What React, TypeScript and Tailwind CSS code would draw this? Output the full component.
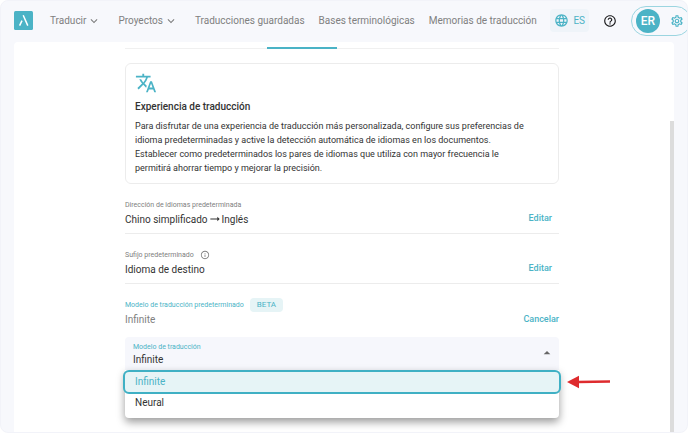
import React, { useState } from "react";
import {
	MdArrowDropUp,
	MdArrowRightAlt,
	MdExpandMore,
	MdHelpOutline,
	MdInfoOutline,
	MdLanguage,
	MdOutlineSettings,
	MdTranslate,
} from "react-icons/md";

const models = ["Infinite", "Neural"];

interface NavItemProps {
	text: string;
	menu?: boolean;
}

const NavItem = ({ text, menu }: NavItemProps) => {
	if (menu) {
		return (
			<button type="button" className="mr-[3px] flex items-center gap-px">
				{text}
				<MdExpandMore className="size-[14px]" />
			</button>
		);
	}
	return <a href="#">{text}</a>;
};

const Logo = () => (
	<svg viewBox="0 0 19 19" className="size-[19px]" aria-hidden="true">
		<rect width="19" height="19" rx="1.5" fill="#4bb3c6" />
		<path
			d="M9.2 4.2 13.8 14.6M8 9.6 5.6 14.6"
			fill="none"
			stroke="#fff"
			strokeWidth="1.5"
		/>
	</svg>
);

const Header = () => (
	<header className="flex h-[41px] items-center overflow-hidden pb-[2px] pl-[13px] whitespace-nowrap">
		<a href="#" aria-label="Inicio" className="mr-[17px] shrink-0">
			<Logo />
		</a>
		<nav className="flex shrink-0 items-center gap-[14px] text-[10px] text-[#808080]">
			<NavItem text="Traducir" menu />
			<NavItem text="Proyectos" menu />
			<NavItem text="Traducciones guardadas" />
			<NavItem text="Bases terminológicas" />
			<NavItem text="Memorias de traducción" />
		</nav>
		<div className="ml-auto flex shrink-0 items-center">
			<button
				type="button"
				className="flex h-[23px] items-center gap-1 rounded-sm bg-[#eff4f9] px-1 text-[10px] text-[#4bb3c6]"
			>
				<MdLanguage className="size-[15px]" />
				ES
			</button>
			<button type="button" aria-label="Ayuda" className="mx-[14px]">
				<MdHelpOutline className="size-[14px] text-[#1d1d1f]" />
			</button>
			<div className="-mr-1 flex h-[30px] items-center gap-[10px] rounded-full border border-[#9bd5e0] pr-[6px] pl-1">
				<span className="flex size-6 items-center justify-center rounded-full bg-[#4bb3c6] text-xs font-medium text-white">
					ER
				</span>
				<button type="button" aria-label="Ajustes">
					<MdOutlineSettings className="size-[14px] text-[#4bb3c6]" />
				</button>
			</div>
		</div>
	</header>
);

interface SettingRowProps {
	label: React.ReactNode;
	value: React.ReactNode;
}

const SettingRow = ({ label, value }: SettingRowProps) => (
	<div className="flex items-end justify-between border-b border-[#ececec] pt-[15px] pb-[6px]">
		<div>
			<p className="flex h-3 items-center gap-[6px] text-[7px] text-[#808080]">
				{label}
			</p>
			<p className="flex h-4 items-center text-[10px]">{value}</p>
		</div>
		<button
			type="button"
			className="h-4 px-[7px] text-[9px] font-medium text-[#4bb3c6]"
		>
			Editar
		</button>
	</div>
);

const ModelSelect = () => {
	const [model, setModel] = useState("Infinite");
	const [open, setOpen] = useState(true);

	const choose = (value: string) => {
		setModel(value);
		setOpen(false);
	};

	return (
		<div className="relative mt-[9px]">
			<div className="rounded-t-sm border-b border-[#4bb3c6] bg-[#f6f7fc] px-2 py-1">
				<label
					htmlFor="model"
					className="block h-3 text-[7px] leading-3 text-[#4bb3c6]"
				>
					Modelo de traducción
				</label>
				<select
					id="model"
					value={model}
					onChange={(e) => choose(e.target.value)}
					onMouseDown={(e) => {
						e.preventDefault();
						setOpen(!open);
					}}
					className="block h-[13px] w-full appearance-none bg-transparent text-[10px] leading-[13px] outline-none"
				>
					{models.map((m) => (
						<option key={m}>{m}</option>
					))}
				</select>
				<MdArrowDropUp className="pointer-events-none absolute top-2 right-1 size-4 text-[#666]" />
			</div>
			{open && (
				<div className="absolute inset-x-0 top-full">
					<ul className="rounded-b bg-white pb-[6px] text-[10px] shadow-[0_4px_8px_rgba(0,0,0,0.4)]">
						{models.map((m) => (
							<li key={m}>
								<button
									type="button"
									onClick={() => choose(m)}
									className={
										m === model
											? "-mx-[2px] -mt-px flex h-6 w-[calc(100%+4px)] items-center rounded-md border-2 border-[#3fb0c4] bg-[#e6f4f6] px-[10px] pb-px text-[#4bb3c6]"
											: "flex h-[18px] w-full items-center px-[10px] pb-px"
									}
								>
									{m}
								</button>
							</li>
						))}
					</ul>
					<svg
						viewBox="0 0 44 14"
						className="absolute top-1 left-full ml-2 h-[14px] w-11"
						aria-hidden="true"
					>
						<path d="M0 7 12 .8V13.2Z" fill="#de2b2e" />
						<path d="M11 7 43 6.5" stroke="#de2b2e" strokeWidth="2.6" />
					</svg>
				</div>
			)}
		</div>
	);
};

const App = () => (
	<div className="flex min-h-screen flex-col overflow-hidden rounded-lg border border-[#f2f3f9] bg-[#f7f8fc] font-['Roboto',sans-serif] text-[#333]">
		<Header />
		<main className="mx-[13px] flex grow rounded-t bg-white">
			<div className="grow pb-3">
				<div className="mx-auto max-w-[434px]">
					<div className="border-b border-[#f0f0f0] pl-[142px]">
						<div className="-mb-px h-[7px] w-[70px] border-b-2 border-[#4bb3c6]" />
					</div>

					<section className="mt-[14px] rounded-md border border-[#ececec] px-[9px] pt-2 pb-2">
						<MdTranslate className="size-[22px] text-[#4bb3c6]" />
						<h2 className="mt-[6px] text-[10px] leading-[14px] font-medium">
							Experiencia de traducción
						</h2>
						<p className="mt-[5px] pr-[14px] text-[9px] leading-[14px]">
							Para disfrutar de una experiencia de traducción más
							personalizada, configure sus preferencias de idioma
							predeterminadas y active la detección automática de idiomas en
							los documentos.
							<br />
							Establecer como predeterminados los pares de idiomas que utiliza
							con mayor frecuencia le permitirá ahorrar tiempo y mejorar la
							precisión.
						</p>
					</section>

					<SettingRow
						label="Dirección de idiomas predeterminada"
						value={
							<>
								Chino simplificado
								<MdArrowRightAlt className="size-[14px]" />
								Inglés
							</>
						}
					/>
					<SettingRow
						label={
							<>
								Sufijo predeterminado
								<MdInfoOutline className="size-[10px]" />
							</>
						}
						value="Idioma de destino"
					/>

					<div className="flex items-end justify-between pt-[14px]">
						<div>
							<p className="flex items-center gap-[6px] text-[7px] text-[#4bb3c6]">
								Modelo de traducción predeterminado
								<span className="flex h-[14px] items-center rounded bg-[#e6f4f6] px-[7px] text-[8px]">
									BETA
								</span>
							</p>
							<p className="h-4 text-[10px] leading-4 text-[#808080]">
								Infinite
							</p>
						</div>
						<button
							type="button"
							className="h-4 text-[9px] font-medium text-[#4bb3c6]"
						>
							Cancelar
						</button>
					</div>
					<ModelSelect />
				</div>
			</div>
			<div className="mt-[79px] w-1 shrink-0 bg-[#dcdcdc]" />
		</main>
	</div>
);

export default App;
